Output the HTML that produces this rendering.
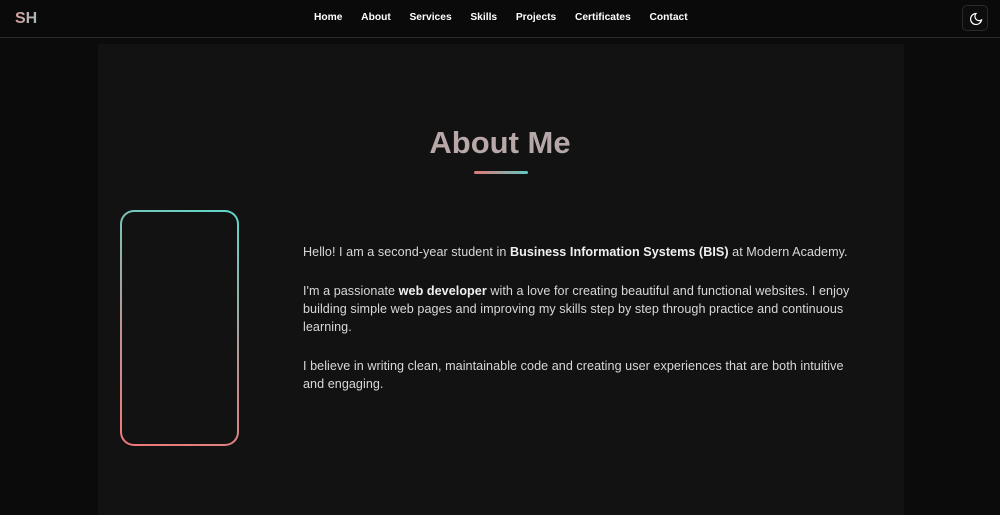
<!DOCTYPE html>
<html><head><meta charset="utf-8"><style>
*{margin:0;padding:0;box-sizing:border-box}
body{width:1000px;height:515px;background:#0b0b0b;font-family:"Liberation Sans","DejaVu Sans",sans-serif;overflow:hidden;position:relative;color:#ddd}
nav{position:absolute;top:0;left:0;width:1000px;height:38px;background:#0a0a0a;border-bottom:1px solid #2a2a2a}
.logo{position:absolute;left:15px;top:10px;font-weight:bold;font-size:16px;background:linear-gradient(90deg,#d8a0a0,#a8b8b8);-webkit-background-clip:text;color:transparent}
.links{position:absolute;top:12px;left:314px;font-size:10.25px;font-weight:bold;color:#fff;white-space:nowrap}
.links span{margin-right:18.7px}
.btn{position:absolute;right:12px;top:5px;width:26px;height:26px;border:1px solid #2a2a2a;border-radius:5px;background:#0d0d0d}
.panel{position:absolute;left:98px;top:44px;width:806px;height:471px;background:#121212}
h1{position:absolute;top:125px;left:0;width:1000px;text-align:center;font-size:31px;background:linear-gradient(90deg,#c8a4a4,#a8acac);-webkit-background-clip:text;color:transparent}
.ul{position:absolute;left:474px;top:171px;width:54px;height:3px;border-radius:2px;background:linear-gradient(90deg,#e07878,#60c8c0)}
.frame{position:absolute;left:120px;top:210px;width:119px;height:236px;border-radius:14px;padding:2px;background:linear-gradient(200deg,#5ed8c8,#c09090 60%,#f07878)}
.frame div{width:100%;height:100%;border-radius:12px;background:#121212}
.txt{position:absolute;left:303px;top:243px;width:562px;font-size:12.6px;letter-spacing:0.05px;line-height:18px;color:#d8d8d8}
.txt p{margin-bottom:21px}
b{color:#f0f0f0}
</style></head><body>
<div class="panel"></div>
<nav><div class="logo">SH</div>
<div class="links"><span>Home</span><span>About</span><span>Services</span><span>Skills</span><span>Projects</span><span>Certificates</span><span>Contact</span></div>
<div class="btn"><svg width="26" height="26" viewBox="0 0 26 26"><path d="M13 7.5a5.5 5.5 0 1 0 5.5 6.5a4.3 4.3 0 0 1-5.5-6.5z" fill="none" stroke="#fff" stroke-width="1.2"/></svg></div></nav>
<h1>About Me</h1><div class="ul"></div>
<div class="frame"><div></div></div>
<div class="txt">
<p>Hello! I am a second-year student in <b>Business Information Systems (BIS)</b> at Modern Academy.</p>
<p>I'm a passionate <b>web developer</b> with a love for creating beautiful and functional websites. I enjoy building simple web pages and improving my skills step by step through practice and continuous learning.</p>
<p>I believe in writing clean, maintainable code and creating user experiences that are both intuitive and engaging.</p>
</div>
</body></html>
